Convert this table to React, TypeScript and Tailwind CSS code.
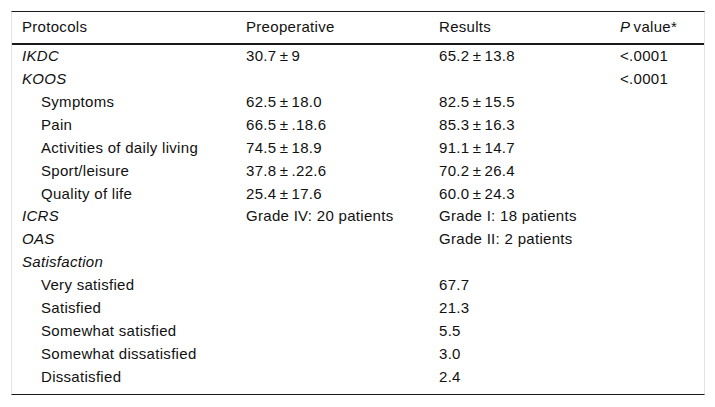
import React from "react";

type Row = {
    label: string;
    italic?: boolean;
    indent?: boolean;
    pre?: string;
    res?: string;
    p?: string;
};

const pm = "\u2009±\u2009";

const rows: Row[] = [
    { label: "IKDC", italic: true, pre: `30.7${pm}9`, res: `65.2${pm}13.8`, p: "<.0001" },
    { label: "KOOS", italic: true, p: "<.0001" },
    { label: "Symptoms", indent: true, pre: `62.5${pm}18.0`, res: `82.5${pm}15.5` },
    { label: "Pain", indent: true, pre: `66.5${pm}.18.6`, res: `85.3${pm}16.3` },
    { label: "Activities of daily living", indent: true, pre: `74.5${pm}18.9`, res: `91.1${pm}14.7` },
    { label: "Sport/leisure", indent: true, pre: `37.8${pm}.22.6`, res: `70.2${pm}26.4` },
    { label: "Quality of life", indent: true, pre: `25.4${pm}17.6`, res: `60.0${pm}24.3` },
    { label: "ICRS", italic: true, pre: "Grade IV: 20 patients", res: "Grade I: 18 patients" },
    { label: "OAS", italic: true, res: "Grade II: 2 patients" },
    { label: "Satisfaction", italic: true },
    { label: "Very satisfied", indent: true, res: "67.7" },
    { label: "Satisfied", indent: true, res: "21.3" },
    { label: "Somewhat satisfied", indent: true, res: "5.5" },
    { label: "Somewhat dissatisfied", indent: true, res: "3.0" },
    { label: "Dissatisfied", indent: true, res: "2.4" },
];

const cols = "grid grid-cols-[224px_193px_181px_95px]";

export default function App() {
    return (
        <div className="w-[715px] h-[407px] bg-white pt-[11px] pl-[11px] font-['Liberation_Sans',Arial,sans-serif] text-[15px] tracking-[0.3px] text-[#111]">
            <div className="w-[694px] border-t border-t-[#1a1a1a] border-x border-x-[#e4e4e4] border-b border-b-[#1a1a1a] pb-[6px]">
                {/* Header */}
                <div className={`${cols} h-[33px] items-center border-b-2 border-[#1a1a1a]`}>
                    <div className="pl-[10px]">Protocols</div>
                    <div className="pl-[10px]">Preoperative</div>
                    <div className="pl-[10px]">Results</div>
                    <div className="pl-[10px]">
                        <span className="italic">P</span>&thinsp;value*
                    </div>
                </div>

                {/* Body */}
                {rows.map((r) => (
                    <div key={r.label} className={`${cols} h-[22.9px] items-center whitespace-nowrap`}>
                        <div className={r.indent ? "pl-[29px]" : r.italic ? "pl-[10px] italic" : "pl-[10px]"}>
                            {r.label}
                        </div>
                        <div className="pl-[10px]">{r.pre}</div>
                        <div className="pl-[10px]">{r.res}</div>
                        <div className="pl-[10px]">{r.p}</div>
                    </div>
                ))}
            </div>
        </div>
    );
}
